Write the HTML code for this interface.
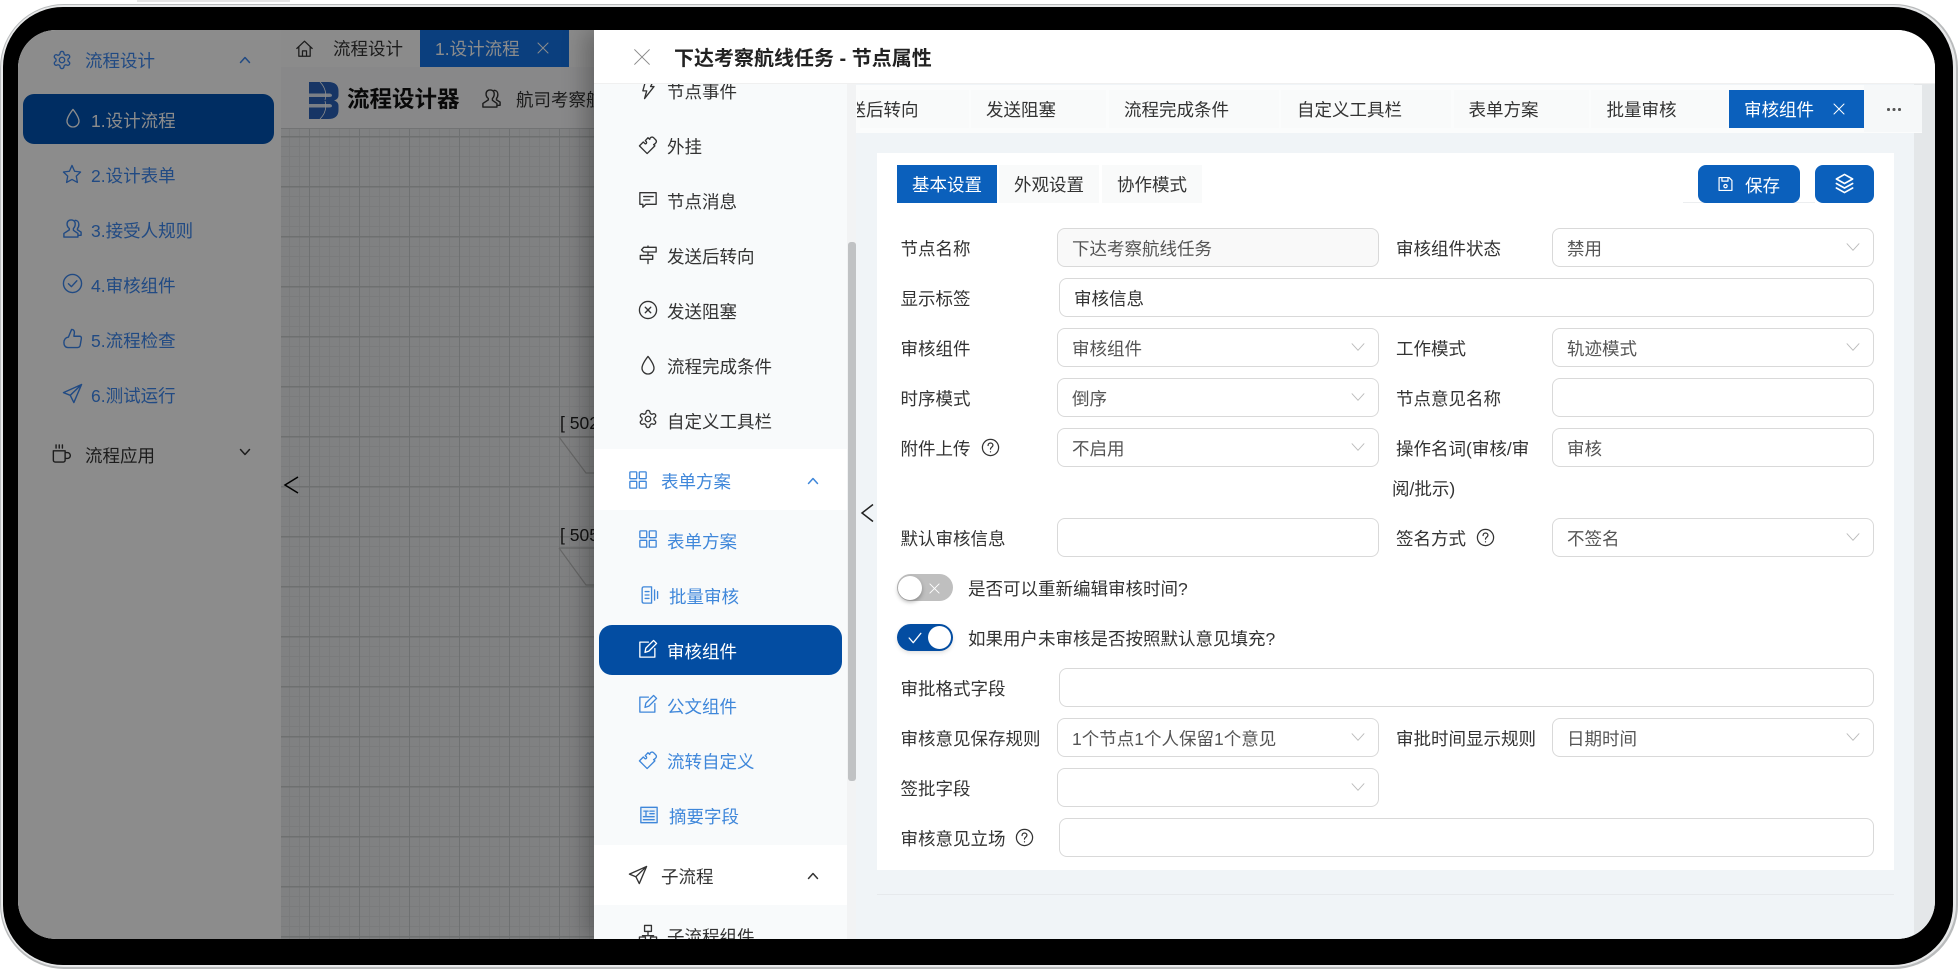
<!DOCTYPE html>
<html lang="zh-CN"><head><meta charset="utf-8"><title>流程设计</title>
<style>
html,body{margin:0;padding:0;background:#fff}
body{position:relative;width:1960px;height:970px;overflow:hidden;font-family:"Liberation Sans","Noto Sans CJK SC",sans-serif;color:#333}
div,span,svg{box-sizing:border-box}
symbol{overflow:visible}
.a{position:absolute}
.t{position:absolute;line-height:30px;height:30px;white-space:nowrap;font-size:17.5px;margin-top:1px}
.i{position:absolute;fill:none;stroke:currentColor;stroke-width:1.55;stroke-linejoin:round;stroke-linecap:round;overflow:visible}
.c{stroke-width:3}
.d{color:#bbb;stroke-width:1.35}
.blue{color:#3f87da}
.sb{color:#3d88ee}
.lb{color:#333}
.f{position:absolute;height:39px;border:1.25px solid #d9d9d9;border-radius:8px;background:#fff}
.A{left:1057px;width:322px}.R{left:1552px;width:322px}.W{left:1059px;width:815px}
.v{color:#555;margin-left:-1px}
.tab{position:absolute;top:90px;height:38px;background:#f9fafa}
.tt{margin-left:-1px}
</style></head><body>
<svg width="0" height="0" style="position:absolute">
<symbol id="gear" viewBox="1.5 1.5 21 21"><path d="M12.22 2h-.44a2 2 0 0 0-2 2v.18a2 2 0 0 1-1 1.73l-.43.25a2 2 0 0 1-2 0l-.15-.08a2 2 0 0 0-2.73.73l-.22.38a2 2 0 0 0 .73 2.73l.15.1a2 2 0 0 1 1 1.72v.51a2 2 0 0 1-1 1.74l-.15.09a2 2 0 0 0-.73 2.73l.22.38a2 2 0 0 0 2.73.73l.15-.08a2 2 0 0 1 2 0l.43.25a2 2 0 0 1 1 1.73V20a2 2 0 0 0 2 2h.44a2 2 0 0 0 2-2v-.18a2 2 0 0 1 1-1.73l.43-.25a2 2 0 0 1 2 0l.15.08a2 2 0 0 0 2.73-.73l.22-.39a2 2 0 0 0-.73-2.73l-.15-.08a2 2 0 0 1-1-1.74v-.5a2 2 0 0 1 1-1.74l.15-.09a2 2 0 0 0 .73-2.73l-.22-.38a2 2 0 0 0-2.73-.73l-.15.08a2 2 0 0 1-2 0l-.43-.25a2 2 0 0 1-1-1.73V4a2 2 0 0 0-2-2z"/><circle cx="12" cy="12" r="3.2"/></symbol>
<symbol id="drop" viewBox="1.5 1.5 21 21"><path d="M12 2C12 2 5 10.5 5 15.5a7 7 0 0 0 14 0C19 10.500 12 2 12 2z"/></symbol>
<symbol id="star" viewBox="1.5 1.5 21 21"><path d="M12 2 15 8.800 22 9.700 17 14.500 18.300 21.800 12 18.300 5.700 21.800 7 14.500 2 9.700 9 8.800z"/></symbol>
<symbol id="user" viewBox="1.5 1.5 21 21"><path d="M8.500 13.500 2.500 17.500V21.500H18V17.500L13 14M8.500 13.500V12C6.500 10.500 6 8.500 6 7C6 4 8 2.500 10.500 2.500C13 2.500 15 4 15 7C15 8.500 14.500 10.500 13 12V14M15 3C17.500 3 19 5 19 7.500C19 9.500 18.500 11 17.500 12V13.500L21.500 16V19.500H18.500"/></symbol>
<symbol id="chk" viewBox="1.5 1.5 21 21"><circle cx="12" cy="12" r="10"/><path d="M7.500 12.300 10.800 15.500 16.800 9"/></symbol>
<symbol id="xc" viewBox="1.5 1.5 21 21"><circle cx="12" cy="12" r="10"/><path d="M8.800 8.800 15.200 15.200M15.200 8.800 8.800 15.200"/></symbol>
<symbol id="like" viewBox="1.5 1.5 21 21"><path d="M7.500 10.500 11 2C13.500 2 14.500 4 14 6.500L13.500 9.500H20C21.500 9.500 22 11 21.800 12L20.500 19.500C20.200 21 19 22 17.500 22H7C4 22 2.500 19.500 2.500 16.500S4.500 10.500 7.500 10.500z"/></symbol>
<symbol id="send" viewBox="1.5 1.5 21 21"><path d="M22 2 2 11 9.500 14 13.500 22zM22 2 9.500 14"/></symbol>
<symbol id="cup" viewBox="1.5 1.5 21 21"><path d="M3 9H16V19.500A2 2 0 0 1 14 21.500H5A2 2 0 0 1 3 19.500zM16 11H18.500A3 3 0 0 1 18.500 17.500H16M6 2.500V6M9.500 2.500V6M13 2.500V6"/></symbol>
<symbol id="home" viewBox="1.5 1.5 21 21"><path d="M2.500 12 12 3 21.500 12M5 10V21.500H19V10M9.500 21.500V15H14.500V21.500"/></symbol>
<symbol id="puz" viewBox="1.5 1.5 21 21"><path d="M2 13 6.500 8.500 8.500 10.500C10 11 11 9.500 10 8L8.800 7 12 3.500 14 5.500C14 3 17 2 18.500 3.500L21 6C22 7 22 8 21.500 9C21 10 20 11 18.500 11.500L20 13 11 22Z"/></symbol>
<symbol id="msg" viewBox="1.5 1.5 21 21"><path d="M3.500 3.500H21.500V17H9.500L6 20.500V17H2.500V3.500zM7 8H18M7 12H14"/></symbol>
<symbol id="sign" viewBox="1.5 1.500 21 21"><path d="M7 3H21.500V8.500H7L4.500 6zM3 12.500H17.500V17H3zM12 8.500V12.500M12 17V22M12 1.500V3"/></symbol>
<symbol id="bolt" viewBox="1.5 1.5 21 21"><path d="M9 2H18L15 8H19L8 22 10.500 13H6z"/></symbol>
<symbol id="apps" viewBox="1.5 1.5 21 21"><rect x="2.500" y="2.500" width="8" height="8" rx=".8"/><rect x="13.500" y="2.500" width="8" height="8" rx=".8"/><rect x="2.500" y="13.500" width="8" height="8" rx=".8"/><rect x="13.500" y="13.500" width="8" height="8" rx=".8"/></symbol>
<symbol id="batch" viewBox="1.5 1.5 21 21"><path d="M4 4.500C4 3 5 2.500 6 2.500H15V21.500H6C5 21.500 4 21 4 19.500zM7.500 8H12M7.500 12H12M7.500 16H12M18.500 6V18M22 8V16"/></symbol>
<symbol id="edit" viewBox="1.5 1.5 21 21"><path d="M12.500 4H2.500V21.500H20V11.500M8.500 16 9.500 11 18.500 2 22 5.500 13 14.500z"/></symbol>
<symbol id="txt" viewBox="1.5 1.5 21 21"><rect x="2.500" y="3" width="19" height="18" fill="currentColor" fill-opacity=".08"/><path d="M6 7.500H11M8.500 7.500V14M13 7.500H18M13 10.500H18M5.500 14H18M5.500 17.500H18"/></symbol>
<symbol id="sub" viewBox="1.5 1.5 21 21"><rect x="8" y="2" width="8" height="7"/><path d="M12 9V14M5.500 14H18.500"/><rect x="2" y="15.500" width="7" height="6"/><rect x="15" y="15.500" width="7" height="6"/></symbol>
<symbol id="q" viewBox="1.5 1.5 21 21"><circle cx="12" cy="12" r="10"/><path d="M9 9.500C9 7.500 10.500 6.500 12 6.500C13.800 6.500 15 7.700 15 9.200C15 11.500 12 11.500 12 14"/><path d="M12 17.200V17.400"/></symbol>
<symbol id="save" viewBox="1.5 1.5 21 21"><path d="M3 3H17L21 7V21H3zM7 3V8H15.500V3"/><circle cx="12" cy="15" r="2.300"/></symbol>
<symbol id="stack" viewBox="1.5 1.5 21 21"><path d="M12 2 21 7 12 12 3 7zM3 12 12 17 21 12M3 17 12 22 21 17"/></symbol>
<symbol id="dn" viewBox="1.5 1.5 21 21"><path d="M3 7 12 17 21 7"/></symbol>
</svg>

<!-- device frame -->
<div class="a" style="left:0;top:4px;width:1958px;height:965px;border-radius:64px;background:#b9bbbc"></div>
<div class="a" style="left:1px;top:5px;width:1955px;height:962px;border-radius:63px;background:#e8e9ea"></div>
<div class="a" style="left:3px;top:7px;width:1950px;height:958px;border-radius:60px;background:#000"></div>
<div class="a" style="left:137px;top:0;width:153px;height:2px;background:#aaa;opacity:.3"></div>

<div class="a" style="left:18px;top:30px;width:1917px;height:909px;overflow:hidden;border-radius:38px;background:#fff">
<div class="a" style="left:-18px;top:-30px;width:1960px;height:970px;filter:blur(.3px)">

<!-- sidebar -->
<div class="a" style="left:18px;top:30px;width:263px;height:909px;background:#fff"></div>
<svg class="i sb" style="left:53px;top:51px" width="18" height="18"><use href="#gear"/></svg>
<div class="t sb" style="left:85px;top:45px">流程设计</div>
<svg class="i sb c" style="left:239px;top:54px" width="12" height="12" viewBox="0 0 24 24"><path d="M3 17 12 7 21 17"/></svg>
<div class="a" style="left:23px;top:94px;width:251px;height:50px;border-radius:11px;background:#0052b2"></div>
<svg class="i" style="left:64px;top:109px;color:#fff" width="18" height="18"><use href="#drop"/></svg>
<div class="t" style="left:91px;top:105px;color:#fff">1.设计流程</div>
<svg class="i sb" style="left:63px;top:165px" width="18" height="18"><use href="#star"/></svg><div class="t sb" style="left:91px;top:160px">2.设计表单</div>
<svg class="i sb" style="left:63px;top:219px" width="19" height="19"><use href="#user"/></svg><div class="t sb" style="left:91px;top:215px">3.接受人规则</div>
<svg class="i sb" style="left:63px;top:274px" width="19" height="19"><use href="#chk"/></svg><div class="t sb" style="left:91px;top:270px">4.审核组件</div>
<svg class="i sb" style="left:63px;top:329px" width="19" height="19"><use href="#like"/></svg><div class="t sb" style="left:91px;top:325px">5.流程检查</div>
<svg class="i sb" style="left:63px;top:384px" width="19" height="19"><use href="#send"/></svg><div class="t sb" style="left:91px;top:380px">6.测试运行</div>
<svg class="i lb" style="left:52px;top:444px" width="19" height="19"><use href="#cup"/></svg>
<div class="t lb" style="left:85px;top:440px">流程应用</div>
<svg class="i lb c" style="left:239px;top:446px" width="12" height="12" viewBox="0 0 24 24"><path d="M3 7 12 17 21 7"/></svg>

<!-- main tabs -->
<div class="a" style="left:281px;top:30px;width:313px;height:37px;background:#fdfdfd"></div>
<svg class="i lb" style="left:296px;top:40px" width="17" height="17"><use href="#home"/></svg>
<div class="t lb" style="left:333px;top:33px">流程设计</div>
<div class="a" style="left:420px;top:30px;width:149px;height:37px;background:#1473e5"></div>
<div class="t" style="left:435px;top:33px;color:#fff">1.设计流程</div>
<svg class="i" style="left:537px;top:42px;color:#fff;stroke-width:2" width="12" height="12" viewBox="0 0 24 24"><path d="M2 2 22 22M22 2 2 22"/></svg>

<!-- toolbar -->
<div class="a" style="left:281px;top:67px;width:313px;height:61px;background:#f7f8f9"></div>
<svg class="a" style="left:309px;top:82px" width="30" height="37" viewBox="0 0 30 37"><path d="M0 0H19C26 0 29.500 3 29.500 9V13C29.500 16 28 17.500 25 18.500C28 19.500 29.500 21 29.500 24V28C29.500 34 26 37 19 37H0Z" fill="#2a62b8"/><path d="M0 11.500H20C22 11.500 23 12.500 23 13.500C23 14.500 22 15 20 15H0ZM0 22H20C22 22 23 23 23 24C23 25 22 25.500 20 25.500H0Z" fill="#fff" opacity=".85"/><path d="M11 0C16 5 18 12 16 18M16 19C18 26 16 32 11 37" stroke="#fff" stroke-width=".8" fill="none"/></svg>
<div class="t" style="left:347px;top:84px;font-size:22.500px;font-weight:700;color:#111">流程设计器</div>
<svg class="i lb" style="left:482px;top:89px" width="19" height="19"><use href="#user"/></svg>
<div class="t lb" style="left:516px;top:84px">航司考察航线任务</div>

<!-- canvas -->
<div class="a" style="left:281px;top:128px;width:313px;height:811px;background-color:#e9eced;border-top:1px solid #d0d2d3;
background-image:linear-gradient(to right,#cbcecf 1px,transparent 1px),linear-gradient(to bottom,#c9cccd 1.25px,transparent 1.25px),linear-gradient(to right,#dee1e2 1px,transparent 1px),linear-gradient(to bottom,#dee1e2 1px,transparent 1px);
background-size:50px 50px,50px 50px,10px 10px,10px 10px;background-position:28px 7px,28px 7px,28px 7px,28px 7px"></div>
<div class="t" style="left:560px;top:407px;font-size:17.5px;color:#222">[ 502</div>
<div class="t" style="left:560px;top:519px;font-size:17.5px;color:#222">[ 505</div>
<svg class="a" style="left:281px;top:128px" width="313" height="811"><path d="M278 309H313M278 309 305 345H313M278 420H313M278 420 305 457H313" fill="none" stroke="#bbb" stroke-width="1.200"/><path d="M17 349 4 357 17 365" fill="none" stroke="#000" stroke-width="1.500"/></svg>

<!-- overlay -->
<div class="a" style="left:18px;top:30px;width:1917px;height:909px;background:rgba(0,0,0,.45)"></div>

<!-- drawer -->
<div class="a" style="left:594px;top:30px;width:1341px;height:909px;background:#fff;box-shadow:-8px 0 22px rgba(0,0,0,.28)"></div>
<!-- menu -->
<div class="a" style="left:594px;top:84px;width:253px;height:365px;background:#f8fafb"></div>
<div class="a" style="left:594px;top:510px;width:253px;height:335px;background:#f8fafb"></div>
<div class="a" style="left:594px;top:905px;width:253px;height:34px;background:#f8fafb"></div>
<svg class="i lb" style="left:639px;top:81px" width="18" height="18"><use href="#bolt"/></svg><div class="t lb" style="left:667px;top:76px">节点事件</div>
<svg class="i lb" style="left:639px;top:136px" width="18" height="18"><use href="#puz"/></svg><div class="t lb" style="left:667px;top:131px">外挂</div>
<svg class="i lb" style="left:639px;top:191px" width="18" height="18"><use href="#msg"/></svg><div class="t lb" style="left:667px;top:186px">节点消息</div>
<svg class="i lb" style="left:639px;top:246px" width="18" height="18"><use href="#sign"/></svg><div class="t lb" style="left:667px;top:241px">发送后转向</div>
<svg class="i lb" style="left:639px;top:301px" width="18" height="18"><use href="#xc"/></svg><div class="t lb" style="left:667px;top:296px">发送阻塞</div>
<svg class="i lb" style="left:639px;top:356px" width="18" height="18"><use href="#drop"/></svg><div class="t lb" style="left:667px;top:351px">流程完成条件</div>
<svg class="i lb" style="left:639px;top:410px" width="18" height="18"><use href="#gear"/></svg><div class="t lb" style="left:667px;top:406px">自定义工具栏</div>

<svg class="i blue" style="left:629px;top:471px" width="18" height="18"><use href="#apps"/></svg><div class="t blue" style="left:661px;top:466px">表单方案</div>
<svg class="i blue c" style="left:807px;top:475px" width="12" height="12" viewBox="0 0 24 24"><path d="M3 17 12 7 21 17"/></svg>

<svg class="i blue" style="left:639px;top:530px" width="18" height="18"><use href="#apps"/></svg><div class="t blue" style="left:667px;top:526px">表单方案</div>
<svg class="i blue" style="left:640px;top:586px" width="18" height="18"><use href="#batch"/></svg><div class="t blue" style="left:669px;top:581px">批量审核</div>
<div class="a" style="left:599px;top:625px;width:243px;height:50px;border-radius:13px;background:#034da2"></div>
<svg class="i" style="left:639px;top:640px;color:#fff" width="18" height="18"><use href="#edit"/></svg><div class="t" style="left:667px;top:636px;color:#fff">审核组件</div>
<svg class="i blue" style="left:639px;top:695px" width="18" height="18"><use href="#edit"/></svg><div class="t blue" style="left:667px;top:691px">公文组件</div>
<svg class="i blue" style="left:639px;top:751px" width="18" height="18"><use href="#puz"/></svg><div class="t blue" style="left:667px;top:746px">流转自定义</div>
<svg class="i blue" style="left:640px;top:806px" width="18" height="18"><use href="#txt"/></svg><div class="t blue" style="left:669px;top:801px">摘要字段</div>

<svg class="i lb" style="left:629px;top:866px" width="18" height="18"><use href="#send"/></svg><div class="t lb" style="left:661px;top:861px">子流程</div>
<svg class="i lb c" style="left:807px;top:870px" width="12" height="12" viewBox="0 0 24 24"><path d="M3 17 12 7 21 17"/></svg>
<svg class="i lb" style="left:639px;top:925px" width="18" height="18"><use href="#sub"/></svg><div class="t lb" style="left:667px;top:921px">子流程组件</div>

<!-- scrollbar -->
<div class="a" style="left:847px;top:84px;width:9px;height:855px;background:#f2f3f4"></div>
<div class="a" style="left:848px;top:242px;width:8px;height:539px;border-radius:3px;background:#c0c2c4"></div>

<!-- drawer header -->
<div class="a" style="left:594px;top:30px;width:1341px;height:54px;background:#fff;border-bottom:1px solid #f0f0f0"></div>
<svg class="i" style="left:634px;top:49px;color:#8a8a8a;stroke-width:1.500" width="16" height="16" viewBox="0 0 24 24"><path d="M1 1 23 23M23 1 1 23"/></svg>
<div class="t" style="left:674px;top:43px;font-size:20px;font-weight:700;color:#222">下达考察航线任务 - 节点属性</div>

<!-- right panel -->
<div class="a" style="left:856px;top:84px;width:1058px;height:855px;background:#f0f4f7"></div>
<div class="a" style="left:1914px;top:84px;width:21px;height:855px;background:#e4e7e9"></div>
<div class="a" style="left:856px;top:85px;width:1066px;height:48px;background:#fbfcfc"></div>
<div class="a" style="left:1864px;top:85px;width:58px;height:47px;background:#f6f8f9"></div>
<svg class="a" style="left:860px;top:503px" width="14" height="20"><path d="M13 1.500 2 10 13 18.500" fill="none" stroke="#222" stroke-width="1.500"/></svg>

<!-- tabs -->
<div class="tab" style="left:860px;width:109px"></div>
<div class="tab" style="left:971px;width:135px"></div>
<div class="tab" style="left:1109px;width:170px"></div>
<div class="tab" style="left:1281px;width:170px"></div>
<div class="tab" style="left:1454px;width:135px"></div>
<div class="tab" style="left:1591px;width:136px"></div>
<div class="tab" style="left:1729px;width:135px;background:#0b60bc"></div>
<div class="a" style="left:857px;top:94px;width:62px;height:32px;overflow:hidden"><div class="t lb tt" style="left:-25px;top:0">发送后转向</div></div>
<div class="t lb tt" style="left:987px;top:94px">发送阻塞</div>
<div class="t lb tt" style="left:1125px;top:94px">流程完成条件</div>
<div class="t lb tt" style="left:1298px;top:94px">自定义工具栏</div>
<div class="t lb tt" style="left:1469.500px;top:94px">表单方案</div>
<div class="t lb tt" style="left:1607.500px;top:94px">批量审核</div>
<div class="t tt" style="left:1745px;top:94px;color:#fff">审核组件</div>
<svg class="i" style="left:1833px;top:103px;color:#fff;stroke-width:2" width="12" height="12" viewBox="0 0 24 24"><path d="M2 2 22 22M22 2 2 22"/></svg>
<div class="a" style="left:1887px;top:108px;width:2.500px;height:2.500px;background:#555;border-radius:50%;box-shadow:5.500px 0 #555,11px 0 #555"></div>

<!-- card -->
<div class="a" style="left:877px;top:153px;width:1017px;height:717px;background:#fff"></div>
<div class="a" style="left:877px;top:894px;width:1017px;height:1px;background:#e6e9ec"></div>
<div class="a" style="left:897px;top:165px;width:100px;height:38px;background:#0b60bc"></div>
<div class="a" style="left:999px;top:165px;width:100px;height:38px;background:#f9fafa"></div>
<div class="a" style="left:1102px;top:165px;width:100px;height:38px;background:#f9fafa"></div>
<div class="t" style="left:912px;top:169px;color:#fff">基本设置</div>
<div class="t lb" style="left:1014px;top:169px">外观设置</div>
<div class="t lb" style="left:1117px;top:169px">协作模式</div>
<div class="a" style="left:1683px;top:202px;width:132px;height:1px;background:#eceef0"></div>
<div class="a" style="left:1698px;top:165px;width:102px;height:38px;border-radius:8px;background:#0b60bc"></div>
<svg class="i" style="left:1718px;top:176px;color:#fff;stroke-width:1.700" width="15" height="16"><use href="#save"/></svg>
<div class="t" style="left:1745px;top:170px;color:#fff">保存</div>
<div class="a" style="left:1815px;top:165px;width:59px;height:38px;border-radius:8px;background:#0b60bc"></div>
<svg class="i" style="left:1835px;top:174px;color:#fff;stroke-width:1.800" width="19" height="19"><use href="#stack"/></svg>

<!-- form -->
<div class="t lb" style="left:900.500px;top:233px">节点名称</div>
<div class="f A" style="top:228px;background:#f9f9f9"></div><div class="t v" style="left:1073px;top:233px">下达考察航线任务</div>
<div class="t lb" style="left:1396px;top:233px">审核组件状态</div>
<div class="f R" style="top:228px"></div><div class="t v" style="left:1568px;top:233px">禁用</div>
<svg class="i d" style="left:1846px;top:240px" width="14" height="14"><use href="#dn"/></svg>

<div class="t lb" style="left:900.500px;top:283px">显示标签</div>
<div class="f W" style="top:278px"></div><div class="t lb" style="left:1074px;top:283px">审核信息</div>

<div class="t lb" style="left:900.500px;top:333px">审核组件</div>
<div class="f A" style="top:328px"></div><div class="t v" style="left:1073px;top:333px">审核组件</div>
<svg class="i d" style="left:1351px;top:340px" width="14" height="14"><use href="#dn"/></svg>
<div class="t lb" style="left:1396px;top:333px">工作模式</div>
<div class="f R" style="top:328px"></div><div class="t v" style="left:1568px;top:333px">轨迹模式</div>
<svg class="i d" style="left:1846px;top:340px" width="14" height="14"><use href="#dn"/></svg>

<div class="t lb" style="left:900.500px;top:383px">时序模式</div>
<div class="f A" style="top:378px"></div><div class="t v" style="left:1073px;top:383px">倒序</div>
<svg class="i d" style="left:1351px;top:390px" width="14" height="14"><use href="#dn"/></svg>
<div class="t lb" style="left:1396px;top:383px">节点意见名称</div>
<div class="f R" style="top:378px"></div>

<div class="t lb" style="left:900.500px;top:433px">附件上传</div>
<svg class="i lb" style="left:982px;top:439px" width="17" height="17"><use href="#q"/></svg>
<div class="f A" style="top:428px"></div><div class="t v" style="left:1073px;top:433px">不启用</div>
<svg class="i d" style="left:1351px;top:440px" width="14" height="14"><use href="#dn"/></svg>
<div class="t lb" style="left:1396px;top:433px">操作名词(审核/审</div>
<div class="t lb" style="left:1392px;top:473px">阅/批示)</div>
<div class="f R" style="top:428px"></div><div class="t v" style="left:1568px;top:433px">审核</div>

<div class="t lb" style="left:900.500px;top:523px">默认审核信息</div>
<div class="f A" style="top:518px"></div>
<div class="t lb" style="left:1396px;top:523px">签名方式</div>
<svg class="i lb" style="left:1477px;top:529px" width="17" height="17"><use href="#q"/></svg>
<div class="f R" style="top:518px"></div><div class="t v" style="left:1568px;top:523px">不签名</div>
<svg class="i d" style="left:1846px;top:530px" width="14" height="14"><use href="#dn"/></svg>

<div class="a" style="left:897px;top:574px;width:56px;height:27px;border-radius:14px;background:#bfbfbf"></div>
<div class="a" style="left:898px;top:576px;width:24px;height:24px;border-radius:50%;background:#fff;box-shadow:0 2px 4px rgba(0,0,0,.3)"></div>
<svg class="i" style="left:929px;top:583px;color:#fff;stroke-width:2" width="11" height="11" viewBox="0 0 24 24"><path d="M2 2 22 22M22 2 2 22"/></svg>
<div class="t lb" style="left:968px;top:573px">是否可以重新编辑审核时间?</div>

<div class="a" style="left:897px;top:624px;width:56px;height:27px;border-radius:14px;background:#034da2;box-shadow:0 2px 4px rgba(0,0,0,.12)"></div>
<div class="a" style="left:928px;top:626px;width:23px;height:23px;border-radius:50%;background:#fff"></div>
<svg class="i" style="left:908px;top:632px;color:#fff;stroke-width:2.200" width="14" height="12" viewBox="0 0 24 20"><path d="M2 10 9 18 22 2"/></svg>
<div class="t lb" style="left:968px;top:623px">如果用户未审核是否按照默认意见填充?</div>

<div class="t lb" style="left:900.500px;top:673px">审批格式字段</div>
<div class="f W" style="top:668px"></div>

<div class="t lb" style="left:900.500px;top:723px">审核意见保存规则</div>
<div class="f A" style="top:718px"></div><div class="t v" style="left:1073px;top:723px">1个节点1个人保留1个意见</div>
<svg class="i d" style="left:1351px;top:730px" width="14" height="14"><use href="#dn"/></svg>
<div class="t lb" style="left:1396px;top:723px">审批时间显示规则</div>
<div class="f R" style="top:718px"></div><div class="t v" style="left:1568px;top:723px">日期时间</div>
<svg class="i d" style="left:1846px;top:730px" width="14" height="14"><use href="#dn"/></svg>

<div class="t lb" style="left:900.500px;top:773px">签批字段</div>
<div class="f A" style="top:768px"></div>
<svg class="i d" style="left:1351px;top:780px" width="14" height="14"><use href="#dn"/></svg>

<div class="t lb" style="left:900.500px;top:823px">审核意见立场</div>
<svg class="i lb" style="left:1016px;top:829px" width="17" height="17"><use href="#q"/></svg>
<div class="f W" style="top:818px"></div>

</div></div>
</body></html>
